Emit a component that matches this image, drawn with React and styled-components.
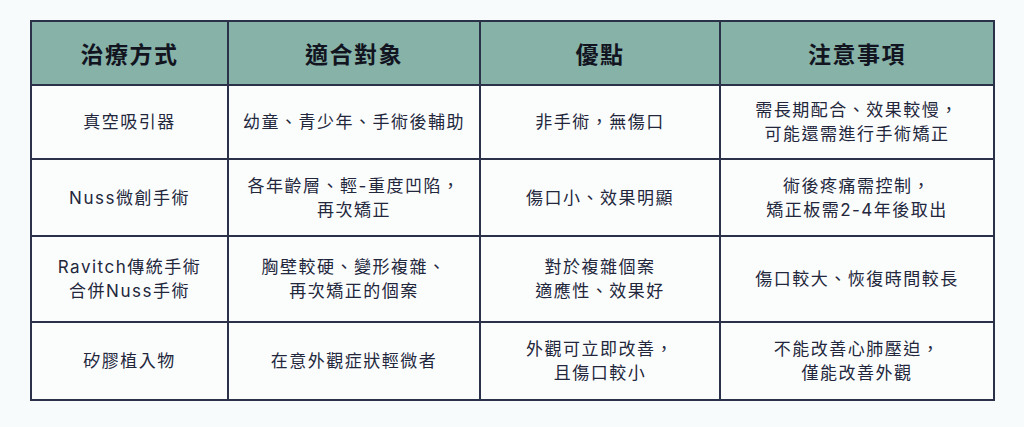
import React from 'react';
import styled, { createGlobalStyle } from 'styled-components';

const GlobalStyle = createGlobalStyle`
    html, body {
        margin: 0;
        padding: 0;
        background: #f7fbfb;
    }
    body {
        font-family: Inter, "Noto Sans CJK TC", "Noto Sans", sans-serif;
        color: #262a40;
    }
`;

const columns = [
    { title: '治療方式', width: 197 },
    { title: '適合對象', width: 252 },
    { title: '優點', width: 240 },
    { title: '注意事項', width: 274 },
];

const rows = [
    {
        height: 74,
        cells: [
            ['真空吸引器'],
            ['幼童、青少年、手術後輔助'],
            ['非手術，無傷口'],
            ['需長期配合、效果較慢，', '可能還需進行手術矯正'],
        ],
    },
    {
        height: 77,
        cells: [
            ['Nuss微創手術'],
            ['各年齡層、輕-重度凹陷，', '再次矯正'],
            ['傷口小、效果明顯'],
            ['術後疼痛需控制，', '矯正板需2-4年後取出'],
        ],
    },
    {
        height: 86,
        cells: [
            ['Ravitch傳統手術', '合併Nuss手術'],
            ['胸壁較硬、變形複雜、', '再次矯正的個案'],
            ['對於複雜個案', '適應性、效果好'],
            ['傷口較大、恢復時間較長'],
        ],
    },
    {
        height: 78,
        cells: [
            ['矽膠植入物'],
            ['在意外觀症狀輕微者'],
            ['外觀可立即改善，', '且傷口較小'],
            ['不能改善心肺壓迫，', '僅能改善外觀'],
        ],
    },
];

const App = () => (
    <Page>
        <GlobalStyle />
        <Table>
            <colgroup>
                {columns.map(({ title, width }) => (
                    <col key={title} style={{ width }} />
                ))}
            </colgroup>
            <thead>
                <HeadRow>
                    {columns.map(({ title }) => (
                        <HeadCell key={title}>{title}</HeadCell>
                    ))}
                </HeadRow>
            </thead>
            <tbody>
                {rows.map(({ height, cells }) => (
                    <tr key={cells[0][0]} style={{ height }}>
                        {cells.map((lines, i) => (
                            <Cell key={i}>
                                {lines.map((line) => (
                                    <Line key={line}>{line}</Line>
                                ))}
                            </Cell>
                        ))}
                    </tr>
                ))}
            </tbody>
        </Table>
    </Page>
);

export default App;

const Page = styled.div`
    width: 1024px;
    height: 427px;
    padding: 20px 0 0 30px;
    box-sizing: border-box;
    background: #f7fbfb;
`;

const Table = styled.table`
    width: 963px;
    table-layout: fixed;
    border-collapse: collapse;
    border: 2px solid #2b3148;
`;

const HeadRow = styled.tr`
    height: 64px;
    background: #87b2a8;
`;

const HeadCell = styled.th`
    border: 2px solid #2b3148;
    font-size: 23px;
    font-weight: 700;
    letter-spacing: 1.5px;
    color: #12151f;
    text-align: center;
    vertical-align: middle;
    padding: 0;
`;

const Cell = styled.td`
    border: 2px solid #2b3148;
    background: #fbfdfd;
    font-size: 17px;
    letter-spacing: 1.5px;
    line-height: 24px;
    text-align: center;
    vertical-align: middle;
    padding: 0 6px;
    color: #23273c;
`;

const Line = styled.div`
    white-space: nowrap;
`;
